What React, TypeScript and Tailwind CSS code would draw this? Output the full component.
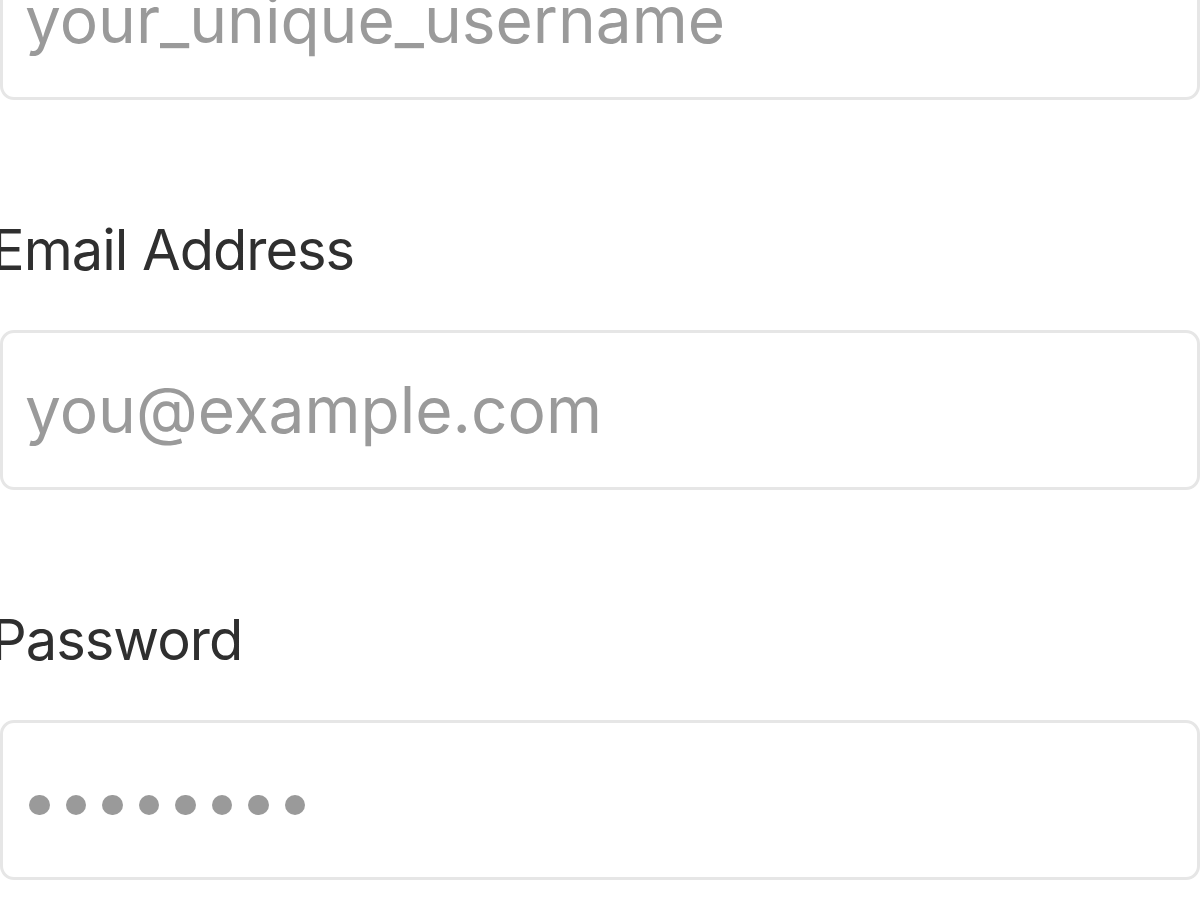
export default function App() {
  const font = { fontFamily: 'Inter, "Noto Sans", sans-serif' };
  return (
    <div className="w-[1200px] h-[900px] overflow-hidden bg-white" style={font}>
      <div className="flex flex-col -mt-[60px]">
        <div className="h-[160px] border-[3px] border-[#e6e6e6] rounded-[14px] flex items-center pl-[22px]">
          <span className="text-[64px] text-[#9a9a9a] leading-none whitespace-nowrap">your_unique_username</span>
        </div>

        <label className="mt-[110px] mb-[40px] -ml-[9px] text-[56px] leading-[80px] text-[#2f2f2f] font-normal tracking-[-1px] whitespace-nowrap">
          Email Address
        </label>
        <div className="h-[160px] border-[3px] border-[#e6e6e6] rounded-[14px] flex items-center pl-[22px]">
          <span className="text-[64px] text-[#9a9a9a] leading-none whitespace-nowrap">you@example.com</span>
        </div>

        <label className="mt-[110px] mb-[40px] -ml-[9px] text-[56px] leading-[80px] text-[#2f2f2f] font-normal tracking-[-1px] whitespace-nowrap">
          Password
        </label>
        <div className="h-[160px] border-[3px] border-[#e6e6e6] rounded-[14px] flex items-center pl-[26px] pt-[10px] gap-[16px]">
          {[0, 1, 2, 3, 4, 5, 6, 7].map((i) => (
            <span key={i} className="w-[20.5px] h-[20.5px] rounded-full bg-[#9a9a9a]" />
          ))}
        </div>
      </div>
    </div>
  );
}
